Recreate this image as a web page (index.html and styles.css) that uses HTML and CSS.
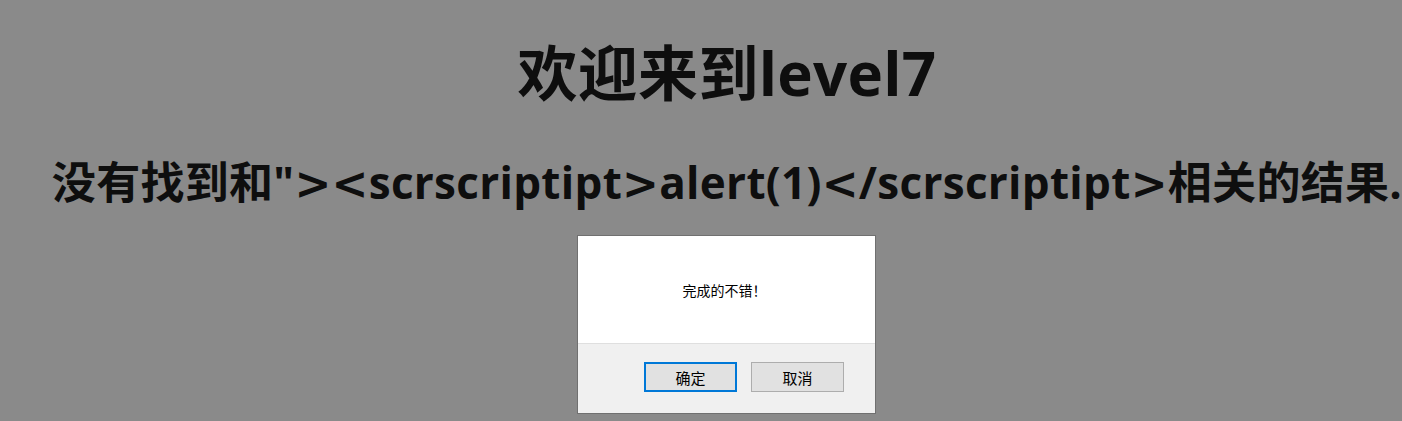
FILE: index.html
```html
<!DOCTYPE html>
<html lang="zh-CN">
<head>
<meta charset="utf-8">
<title>level7</title>
<link rel="stylesheet" href="styles.css">
</head>
<body>
<main class="page">
  <h1 class="title">欢迎来到level7</h1>
  <h2 class="result">没有找到和"<span class="op">&gt;</span><span class="op">&lt;</span>scrscriptipt<span class="op">&gt;</span>alert(1)<span class="op">&lt;</span>/scrscriptipt<span class="op">&gt;</span>相关的结果.</h2>
</main>
<div class="dialog" role="alertdialog">
  <div class="dialog-body">
    <p class="dialog-msg">完成的不错！</p>
  </div>
  <div class="dialog-footer">
    <button class="btn btn-primary">确定</button>
    <button class="btn">取消</button>
  </div>
</div>
</body>
</html>
```

FILE: styles.css
```css
html, body {
  margin: 0;
  padding: 0;
}
body {
  background: #8a8a8a;
  width: 1402px;
  height: 421px;
  overflow: hidden;
  position: relative;
  font-family: "Open Sans", "Noto Sans CJK SC", sans-serif;
  color: #0e0e0e;
}
.page {
  width: 1454px;
  display: flex;
  flex-direction: column;
  align-items: center;
  padding-top: 33px;
}
.title {
  margin: 0;
  font-size: 60px;
  line-height: 80px;
  font-weight: 700;
  letter-spacing: 0.3px;
  white-space: nowrap;
}
.result {
  margin: 39px 0 0;
  font-size: 44px;
  line-height: 60px;
  font-weight: 700;
  letter-spacing: 0.3px;
  white-space: nowrap;
}
.op {
  font-family: "DejaVu Sans", sans-serif;
  font-weight: 700;
}
.dialog {
  position: absolute;
  left: 577px;
  top: 235px;
  width: 297px;
  height: 177px;
  border: 1px solid #707070;
  background: #f0f0f0;
  display: flex;
  flex-direction: column;
  font-family: "Noto Sans CJK SC", sans-serif;
}
.dialog-body {
  height: 107px;
  background: #ffffff;
  border-bottom: 1px solid #dfdfdf;
  display: flex;
  justify-content: center;
  align-items: center;
}
.dialog-msg {
  margin: 1px 4px 0 0;
  font-size: 14px;
  line-height: 20px;
  color: #000;
}
.dialog-footer {
  display: flex;
  justify-content: flex-end;
  gap: 14px;
  padding: 18px 31px 0 0;
}
.btn {
  width: 93px;
  height: 30px;
  box-sizing: border-box;
  border: 1px solid #adadad;
  background: #e1e1e1;
  font-family: "Noto Sans CJK SC", sans-serif;
  font-size: 15px;
  color: #000;
  padding: 0;
}
.btn-primary {
  border: 2px solid #0078d7;
}
```
